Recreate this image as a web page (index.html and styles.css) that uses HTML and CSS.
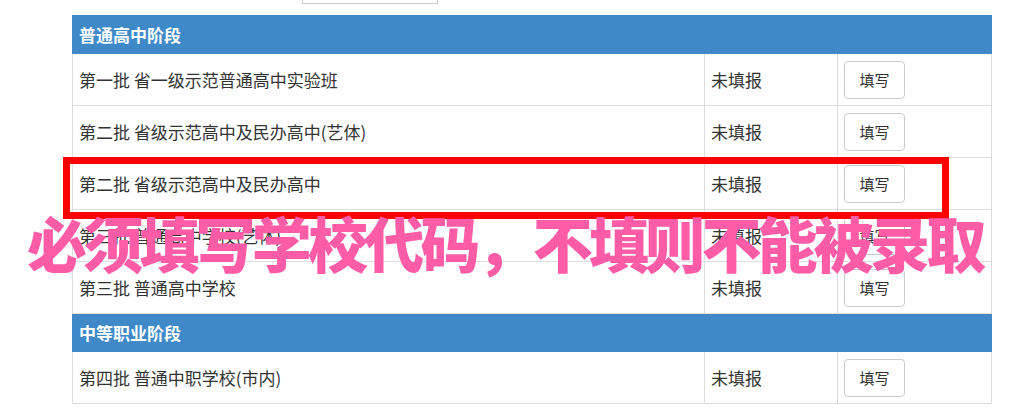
FILE: index.html
```html
<!DOCTYPE html>
<html lang="zh-CN">
  <head>
    <meta charset="UTF-8" />
    <meta name="viewport" content="width=device-width, initial-scale=1.0" />
    <title>志愿填报</title>
    <link rel="stylesheet" href="styles.css">
  </head>
  <body>
    <div class="search-bar">
      <div class="search-input"></div>
    </div>

    <table class="batch-table">
      <colgroup>
        <col class="col-name" />
        <col class="col-status" />
        <col class="col-action" />
      </colgroup>
      <tbody>
        <tr class="stage-header">
          <td colspan="3">普通高中阶段</td>
        </tr>
        <tr>
          <td>第一批 省一级示范普通高中实验班</td>
          <td>未填报</td>
          <td><button>填写</button></td>
        </tr>
        <tr>
          <td>第二批 省级示范高中及民办高中(艺体)</td>
          <td>未填报</td>
          <td><button>填写</button></td>
        </tr>
        <tr>
          <td>第二批 省级示范高中及民办高中</td>
          <td>未填报</td>
          <td><button>填写</button></td>
        </tr>
        <tr>
          <td>第三批 普通高中学校(艺体)</td>
          <td>未填报</td>
          <td><button>填写</button></td>
        </tr>
        <tr>
          <td>第三批 普通高中学校</td>
          <td>未填报</td>
          <td><button>填写</button></td>
        </tr>
        <tr class="stage-header">
          <td colspan="3">中等职业阶段</td>
        </tr>
        <tr>
          <td>第四批 普通中职学校(市内)</td>
          <td>未填报</td>
          <td><button>填写</button></td>
        </tr>
      </tbody>
    </table>

    <!-- annotation layer -->
    <div class="highlight-box"></div>
    <div class="notice">必须填写学校代码，不填则不能被录取</div>
  </body>
</html>
```

FILE: styles.css
```css
/* General Styles */
body {
  margin: 0;
  background: #ffffff;
  font-family: "Noto Sans CJK SC", "Microsoft YaHei", sans-serif;
  color: #333333;
}

.search-bar {
  height: 4px;
  padding-left: 302px;
}

.search-input {
  width: 134px;
  height: 3px;
  border: 1px solid #cccccc;
  border-top: none;
}

/* Table Styles */
.batch-table {
  margin: 11px 0 0 72px;
  width: 919px;
  border-collapse: collapse;
  table-layout: fixed;
  font-size: 17px;
}

.col-name {
  width: 632px;
}

.col-status {
  width: 133px;
}

.col-action {
  width: 154px;
}

.batch-table tr {
  height: 52px;
}

.batch-table td {
  padding: 0 6px;
  border: 1px solid #dddddd;
  white-space: nowrap;
  vertical-align: middle;
}

.batch-table tr.stage-header {
  height: 38px;
}

.stage-header td {
  background: #3f89c9;
  border-color: #3f89c9;
  color: #ffffff;
  font-weight: bold;
}

button {
  width: 61px;
  height: 38px;
  background: #ffffff;
  border: 1px solid #cccccc;
  border-radius: 4px;
  color: #333333;
  font-family: inherit;
  font-size: 15px;
  cursor: pointer;
}

/* Annotation */
.highlight-box {
  position: absolute;
  left: 63px;
  top: 157px;
  width: 886px;
  height: 62px;
  border: 7px solid #ff0000;
  box-sizing: border-box;
}

.notice {
  position: absolute;
  left: 27px;
  top: 209px;
  font-size: 60px;
  line-height: 1.1;
  font-weight: 900;
  letter-spacing: -3.8px;
  color: #ff5ca8;
  white-space: nowrap;
}
```
